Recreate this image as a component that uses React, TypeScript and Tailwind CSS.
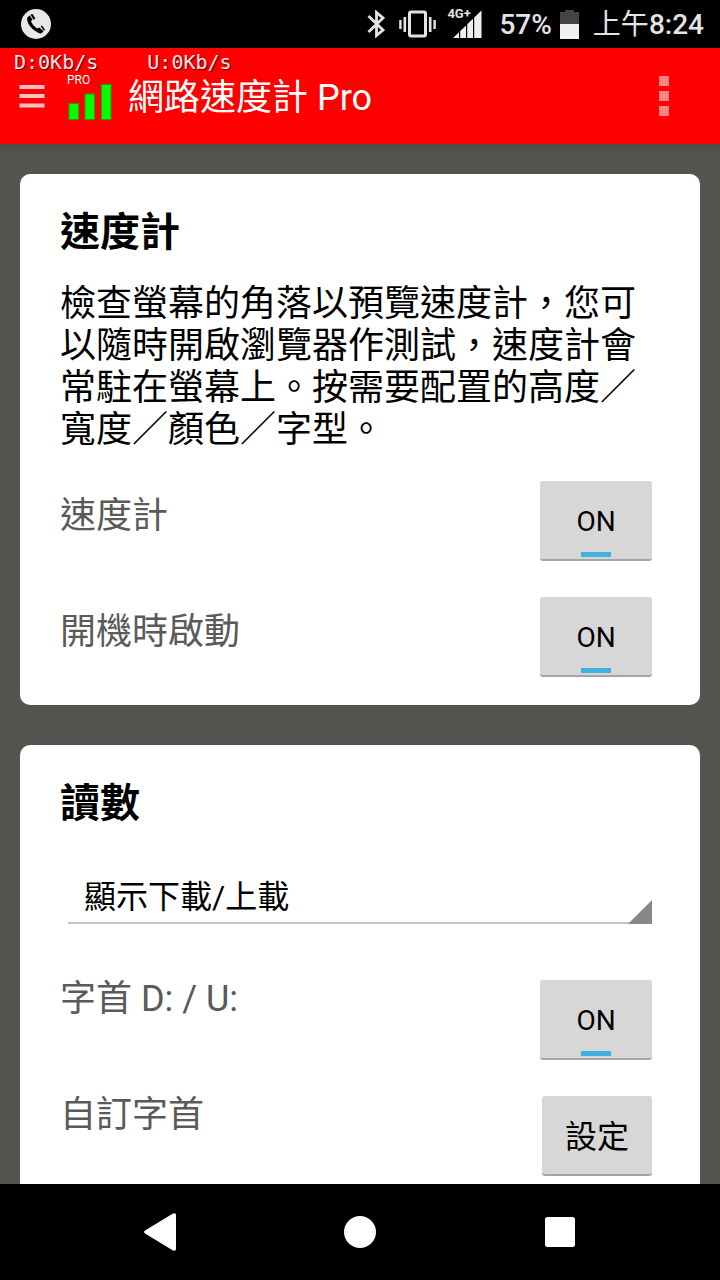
import { useState, type ReactNode } from "react";

const READINGS = ["顯示下載/上載", "顯示下載", "顯示上載"];

function PhoneIcon() {
  return (
    <svg viewBox="0 0 30 30" className="size-[30px]" aria-hidden="true">
      <circle cx="15" cy="15" r="15" fill="#e8e8e8" />
      <path
        d="M6.6 8.2 8.6 6.6 11.4 10.6 10 12.4Q11.6 16.4 16 19.6L18.2 18.6 22.6 22 21 24Q19.6 24.8 17.6 24Q12.6 22 9.2 17.6Q6.2 13.6 6 10Q6 8.8 6.6 8.2Z"
        fill="#000"
      />
      <path
        d="M9.4 5.8 11.6 5 14.4 9.4 12.6 10.8ZM19.6 17.4 21 16.4 24 20.4 23.2 21.8Z"
        fill="#000"
      />
    </svg>
  );
}

function BluetoothIcon() {
  return (
    <svg viewBox="0 0 18 28" className="h-7 w-[18px]" aria-hidden="true">
      <path
        d="M1.5 6 16 20 9.5 25.5V2.5L16 8 1.5 22"
        fill="none"
        stroke="#e4e4e4"
        strokeWidth="2.8"
        strokeLinejoin="miter"
      />
    </svg>
  );
}

function VibrateIcon() {
  return (
    <svg viewBox="0 0 38 28" className="h-7 w-[38px]" aria-hidden="true">
      <rect x="10.5" y="2" width="16" height="24" rx="1.5" fill="none" stroke="#e4e4e4" strokeWidth="3" />
      <path d="M5.8 7v15M31.2 7v15" stroke="#e4e4e4" strokeWidth="2.6" />
      <path d="M1.4 10v9M35.6 10v9" stroke="#e4e4e4" strokeWidth="2.4" />
    </svg>
  );
}

function SignalIcon() {
  return (
    <div className="relative h-7 w-9">
      <span className="absolute -top-1 left-0 text-[13px] leading-4 font-bold">4G+</span>
      <svg viewBox="0 0 36 28" className="size-full" aria-hidden="true">
        <path
          d="M6 28 12 22.2V28ZM13.2 21 19 15.4V28H13.2ZM20.2 14.3 26 8.7V28H20.2ZM27.2 7.5 34.5.5V28H27.2Z"
          fill="#f0f0f0"
        />
      </svg>
    </div>
  );
}

function BatteryIcon() {
  return (
    <svg viewBox="0 0 19 29" className="h-[29px] w-[19px]" aria-hidden="true">
      <path d="M5 0h9v2h5v12H0V2h5Z" fill="#424542" />
      <path d="M0 14h19v15H0Z" fill="#f0f0f0" />
    </svg>
  );
}

function StatusBar() {
  return (
    <div className="relative z-20 flex h-12 shrink-0 items-center justify-between bg-black pr-4 pl-[21px] text-[28px] leading-8 text-[#e4e4e4]">
      <PhoneIcon />
      <div className="flex items-center">
        <BluetoothIcon />
        <div className="ml-3.5">
          <VibrateIcon />
        </div>
        <div className="ml-2.5">
          <SignalIcon />
        </div>
        <span className="ml-4 pt-0.5 font-medium">57%</span>
        <div className="ml-2">
          <BatteryIcon />
        </div>
        <span className="ml-3.5 pt-0.5">
          上午<span className="font-medium">8:24</span>
        </span>
      </div>
    </div>
  );
}

function SpeedOverlay() {
  return (
    <div className="pointer-events-none absolute top-[52px] left-3.5 z-20 flex gap-[49px] font-['DejaVu_Sans_Mono',monospace] text-[20px] leading-5 text-[#ffe4e4] [text-shadow:1px_1px_1px_#400]">
      <span>D:0Kb/s</span>
      <span>U:0Kb/s</span>
    </div>
  );
}

function AppBar() {
  return (
    <header className="relative z-10 flex h-24 shrink-0 items-center bg-[#ff0000] pr-[51px] pl-[19px] text-white shadow-[0_1px_12px_#444]">
      <button type="button" aria-label="Menu">
        <svg viewBox="0 0 26 24" className="h-6 w-[26px]" aria-hidden="true">
          <path d="M.5 3H25.5M.5 12H25.5M.5 21.5H25.5" stroke="#ffc0c0" strokeWidth="4" />
        </svg>
      </button>
      <div className="relative ml-[22px] h-12 w-[46px]">
        <svg viewBox="0 0 46 48" className="size-full" aria-hidden="true">
          <g fill="#00ff00" stroke="#2a9c00" strokeWidth="1">
            <rect x="2" y="31.5" width="9.5" height="16" />
            <rect x="18" y="22" width="9.5" height="25.5" />
            <rect x="34.5" y="12.5" width="9.5" height="35" />
          </g>
        </svg>
        <span className="absolute top-0 left-0 text-[12px] leading-4">PRO</span>
      </div>
      <h1 className="ml-[15px] flex-1 pt-1 text-[36px] leading-[42px]">網路速度計 Pro</h1>
      <button type="button" aria-label="More options">
        <svg viewBox="0 0 10 40" className="h-10 w-2.5" aria-hidden="true">
          <path d="M0 0h10v10H0ZM0 15h10v10H0ZM0 30h10v10H0Z" fill="#ff8585" />
        </svg>
      </button>
    </header>
  );
}

function Card({ title, children }: { title: string; children: ReactNode }) {
  return (
    <section className="rounded-[10px] bg-white pt-[35px] pr-12 pb-7 pl-10">
      <h2 className="text-[40px] leading-[48px] font-bold text-black">{title}</h2>
      {children}
    </section>
  );
}

function ToggleButton({ id }: { id: string }) {
  const [on, setOn] = useState(true);

  return (
    <button
      id={id}
      type="button"
      aria-pressed={on}
      onClick={() => setOn(!on)}
      className="flex h-20 w-28 shrink-0 flex-col items-center justify-end rounded-[3px] border-b-2 border-[#a5a5a5] bg-[#d7d7d7] pb-0.5 text-[28px] leading-8 text-black"
    >
      {on ? "ON" : "OFF"}
      <span className={on ? "mt-3.5 h-[5px] w-[30px] bg-[#3fb1de]" : "mt-3.5 h-[5px] w-[30px] bg-[#b0b0b0]"} />
    </button>
  );
}

export default function App() {
  const [reading, setReading] = useState(READINGS[0]);

  return (
    <div className="relative flex h-screen flex-col overflow-hidden bg-[#535551] font-[Roboto,'Noto_Sans_CJK_TC',sans-serif]">
      <StatusBar />
      <AppBar />
      <SpeedOverlay />

      <main className="flex min-h-0 flex-1 flex-col gap-10 overflow-hidden px-5 pt-[30px] text-[36px] leading-[42px]">
        <Card title="速度計">
          <p className="mt-[26px] text-black">
            檢查螢幕的角落以預覽速度計，您可以隨時開啟瀏覽器作測試，速度計會常駐在螢幕上。按需要配置的高度／寬度／顏色／字型。
          </p>
          <div className="mt-[30px] flex flex-col gap-9 text-[#5a5a5a]">
            <div className="flex justify-between">
              <label htmlFor="meter" className="pt-3.5">速度計</label>
              <ToggleButton id="meter" />
            </div>
            <div className="flex justify-between">
              <label htmlFor="boot" className="pt-3.5">開機時啟動</label>
              <ToggleButton id="boot" />
            </div>
          </div>
        </Card>

        <Card title="讀數">
          <div className="relative mt-10 ml-2">
            <select
              aria-label="讀數"
              value={reading}
              onChange={(e) => setReading(e.target.value)}
              className="block h-14 w-full appearance-none border-b-2 border-[#c4c4c4] bg-transparent pt-1 pl-4 text-[32px] leading-[42px] text-black"
            >
              {READINGS.map((r) => (
                <option key={r}>{r}</option>
              ))}
            </select>
            <svg viewBox="0 0 24 24" className="pointer-events-none absolute right-0 bottom-0 size-6" aria-hidden="true">
              <path d="M24 0V24H0Z" fill="#888" />
            </svg>
          </div>
          <div className="mt-14 flex flex-col gap-9 leading-[38px] text-[#5a5a5a]">
            <div className="flex justify-between">
              <label htmlFor="prefix">字首 D: / U:</label>
              <ToggleButton id="prefix" />
            </div>
            <div className="flex justify-between">
              <label htmlFor="custom">自訂字首</label>
              <button
                id="custom"
                type="button"
                className="h-20 w-[110px] shrink-0 rounded-[3px] border-b-2 border-[#a5a5a5] bg-[#d7d7d7] pt-1 text-[32px] leading-[42px] text-black"
              >
                設定
              </button>
            </div>
          </div>
        </Card>
      </main>

      <nav className="z-10 flex h-24 shrink-0 items-center justify-center gap-[168px] bg-black">
        <button type="button" aria-label="Back">
          <svg viewBox="0 0 32 38" className="h-[38px] w-8" aria-hidden="true">
            <path d="M1 17.5 29 .6Q32 -.5 32 2V36Q32 38.5 29 37.4L1 20.5Q-.8 19 1 17.5Z" fill="#fff" />
          </svg>
        </button>
        <button type="button" aria-label="Home">
          <svg viewBox="0 0 32 32" className="size-8" aria-hidden="true">
            <circle cx="16" cy="16" r="16" fill="#fff" />
          </svg>
        </button>
        <button type="button" aria-label="Recent apps">
          <svg viewBox="0 0 32 32" className="size-8" aria-hidden="true">
            <rect x="1" y="1" width="30" height="30" rx="2.5" fill="#fff" />
          </svg>
        </button>
      </nav>
    </div>
  );
}
